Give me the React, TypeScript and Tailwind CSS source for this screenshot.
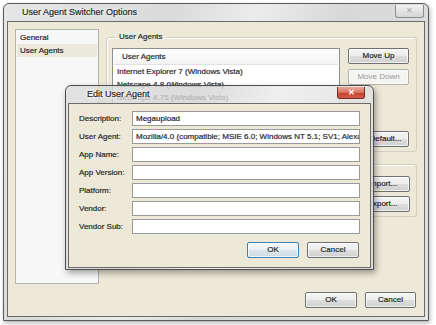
import React from 'react';

const sans = "font-['Segoe_UI','Liberation_Sans',Arial,sans-serif]";

function Btn({
  label,
  w = 'w-[61px]',
  kind = 'normal',
  shift = '',
}: {
  label: string;
  w?: string;
  kind?: 'normal' | 'default' | 'disabled';
  shift?: string;
}) {
  const look =
    kind === 'disabled'
      ? 'border-[#b5b2a7] bg-[#f4f4f2] text-[#9a9a9a] [-webkit-text-stroke:0]'
      : kind === 'default'
        ? 'border-[#3c7fb1] bg-[linear-gradient(#f4f8fb_0%,#e9f0f5_50%,#dbe5ec_50%,#cfdbe4_100%)] text-[#1a1a1a]'
        : 'border-[#707070] bg-[linear-gradient(#f4f4f4_0%,#ececec_50%,#dedede_50%,#d0d0d0_100%)] text-[#1a1a1a]';
  return (
    <div
      className={`${w} h-[16px] shrink-0 rounded-[2px] border flex items-center justify-center text-[8px] leading-none shadow-[inset_0_0_0_1px_rgba(255,255,255,0.7)] ${look} ${shift}`}
    >
      {label}
    </div>
  );
}

const fields = [
  { label: 'Description:', value: 'Megaupload' },
  {
    label: 'User Agent:',
    value: 'Mozilla/4.0 (compatible; MSIE 6.0; Windows NT 5.1; SV1; Alexa Toolbar)',
  },
  { label: 'App Name:', value: '' },
  { label: 'App Version:', value: '' },
  { label: 'Platform:', value: '' },
  { label: 'Vendor:', value: '' },
  { label: 'Vendor Sub:', value: '' },
];

const agents = [
  'Internet Explorer 7 (Windows Vista)',
  'Netscape 4.8 (Windows Vista)',
  'Netscape 4.75 (Windows Vista)',
  'Opera 9.25 (Windows Vista)',
  'Firefox 3.0 (Windows Vista)',
];

export default function App() {
  return (
    <div className={`relative w-[436px] h-[325px] bg-white overflow-hidden pl-[3px] pt-[3px] [-webkit-text-stroke:0.2px_#333] ${sans}`}>
      {/* main window */}
      <div className="w-[426px] h-[318px] rounded-t-[6px] border border-[#5a5a5a] bg-[linear-gradient(115deg,#e6e6e6_0%,#dadada_30%,#ececec_45%,#d8d8d8_60%,#e2e2e2_100%)] shadow-[1px_2px_4px_rgba(0,0,0,0.3)] flex flex-col px-[3px] pb-[3px]">
        {/* title bar */}
        <div className="h-[17px] shrink-0 flex items-center justify-between">
          <span className="pl-[15px] text-[9px] text-[#1a1a1a] [text-shadow:0_0_4px_#fff,0_0_2px_#fff]">
            User Agent Switcher Options
          </span>
          <div className="w-[29px] h-[13px] -mt-[3px] mr-[1px] rounded-b-[3px] border border-[#8c8c8c] border-t-0 bg-[linear-gradient(#f2f2f2,#d6d6d6)] flex items-center justify-center text-[8px] leading-none text-[#a6a6a6] [-webkit-text-stroke:0]">
            ✕
          </div>
        </div>

        {/* client area */}
        <div className="flex-1 border border-[#6b6b6b] bg-[#ece9d8] flex flex-col px-[7px] pt-[7px] pb-[8px]">
          <div className="flex gap-[7px]">
            {/* left nav */}
            <div className="w-[84px] h-[255px] shrink-0 border border-[#b5b2a5] bg-[#f7f7f7] p-[1px] text-[8px] text-[#1a1a1a]">
              <div className="h-[13px] px-[3px] flex items-center">General</div>
              <div className="h-[13px] px-[3px] flex items-center bg-[#ebe8dc]">User Agents</div>
            </div>

            {/* right column */}
            <div className="flex-1 flex flex-col">
              <fieldset className="mt-[2px] border border-[#d3cfbe] rounded-[3px] pl-[5px] pr-[6px] pt-[5px] pb-[4px] shadow-[inset_1px_1px_0_#fff]">
                <legend className="ml-[4px] px-[3px] h-[12px] text-[8px] leading-[12px] text-[#1a1a1a]">
                  User Agents
                </legend>
                <div className="flex gap-[8px]">
                  <div className="w-[228px] h-[99px] border border-[#8e8f8f] bg-white text-[8px] text-[#1a1a1a] overflow-hidden">
                    <div className="h-[15px] mx-[1px] mt-[1px] pl-[8px] flex items-center bg-[linear-gradient(#ffffff,#f3f3f3)] border-b border-[#e2e2e2]">
                      User Agents
                    </div>
                    {agents.map((a) => (
                      <div key={a} className="h-[13px] pl-[4px] flex items-center whitespace-nowrap">
                        {a}
                      </div>
                    ))}
                  </div>
                  <div className="flex flex-col gap-[5px]">
                    <Btn label="Move Up" />
                    <Btn label="Move Down" kind="disabled" />
                    <div className="flex-1" />
                    <Btn label="Default..." shift="pl-[14px]" />
                  </div>
                </div>
              </fieldset>

              <div className="mt-[12px] border border-[#d3cfbe] rounded-[3px] pt-[11px] pb-[4px] pr-[6px] flex flex-col items-end gap-[4px] shadow-[inset_1px_1px_0_#fff]">
                <Btn label="Import..." shift="pl-[6px]" />
                <Btn label="Export..." shift="pl-[6px]" />
              </div>
            </div>
          </div>

          <div className="mt-auto flex justify-end gap-[8px] pr-[1px]">
            <Btn label="OK" w="w-[52px]" />
            <Btn label="Cancel" w="w-[51px]" />
          </div>
        </div>
      </div>

      {/* edit dialog */}
      <div className="absolute left-[65px] top-[85px] w-[309px] h-[185px] rounded-t-[6px] border border-[#4e4e4e] bg-[linear-gradient(115deg,rgba(222,222,222,0.82)_0%,rgba(210,210,210,0.8)_35%,rgba(236,236,236,0.85)_55%,rgba(214,214,214,0.85)_100%)] shadow-[2px_3px_6px_rgba(0,0,0,0.35)] flex flex-col px-[2px] pb-[1px]">
        <div className="h-[17px] shrink-0 flex items-center justify-between">
          <span className="pl-[19px] text-[9px] text-[#1a1a1a] [text-shadow:0_0_4px_#fff,0_0_3px_#fff,0_0_2px_#fff]">
            Edit User Agent
          </span>
          <div className="w-[28px] h-[12px] -mt-[3px] mr-[6px] rounded-b-[3px] border border-[#7a2a20] border-t-0 bg-[linear-gradient(#eaa79c_0%,#d9715f_50%,#c5412c_55%,#d2604b_100%)] flex items-center justify-center text-[8px] leading-none font-bold text-white [-webkit-text-stroke:0]">
            ✕
          </div>
        </div>
        <div className="flex-1 border border-[#6b6b6b] bg-[#ece9d8] pl-[10px] pr-[10px] pt-[7px] flex flex-col gap-[3px] text-[8px] text-[#1a1a1a]">
          {fields.map((f) => (
            <div key={f.label} className="flex items-center h-[15px]">
              <div className="w-[53px] shrink-0 whitespace-nowrap">{f.label}</div>
              <div className="flex-1 h-[15px] border border-[#9a9a9a] bg-white pl-[3px] flex items-center whitespace-nowrap overflow-hidden">
                {f.value}
              </div>
            </div>
          ))}
          <div className="mt-[5px] flex justify-end gap-[8px] pr-[1px]">
            <Btn label="OK" w="w-[52px]" kind="default" />
            <Btn label="Cancel" w="w-[52px]" />
          </div>
        </div>
      </div>
    </div>
  );
}
